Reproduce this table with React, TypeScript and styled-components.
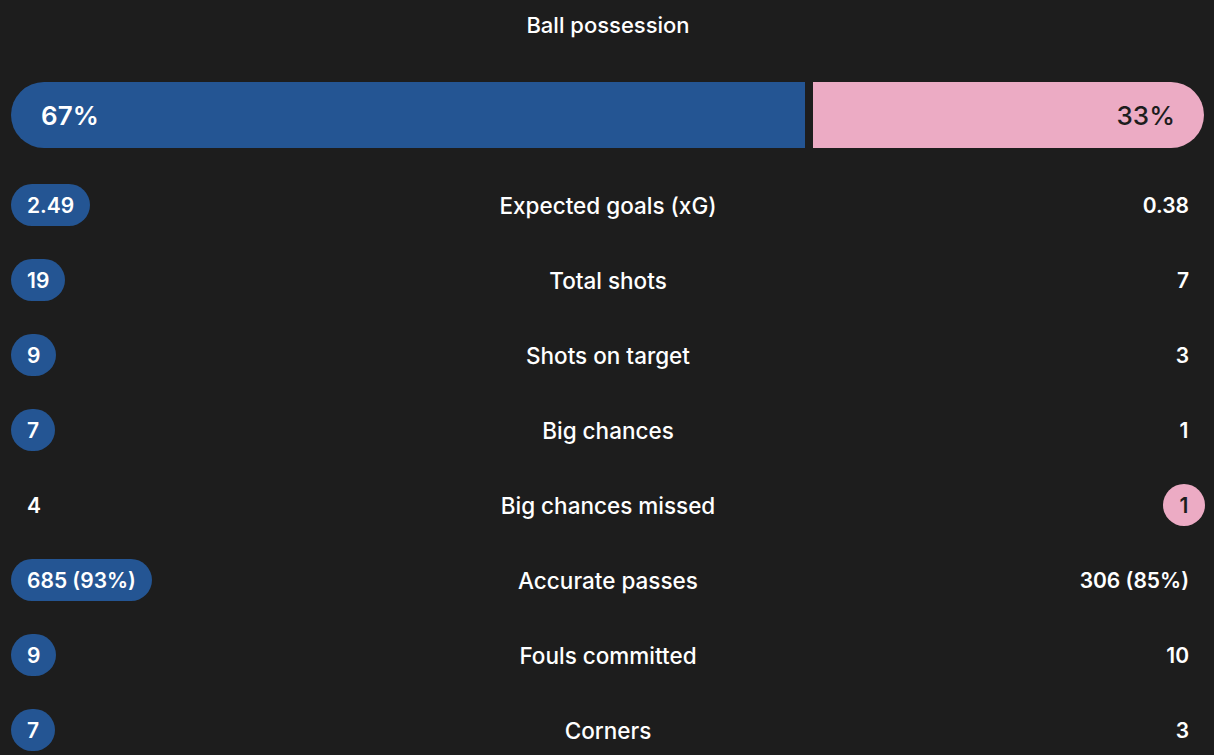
import React from "react";
import styled, { createGlobalStyle } from "styled-components";

const GlobalStyle = createGlobalStyle`
  html, body {
    margin: 0;
    padding: 0;
    background: #1d1d1d;
  }
  body {
    font-family: Inter, "Noto Sans", "Liberation Sans", sans-serif;
    color: #ffffff;
    -webkit-font-smoothing: antialiased;
  }
`;

const Page = styled.div`
  box-sizing: border-box;
  width: 1214px;
  height: 755px;
  overflow: hidden;
  padding: 0 9px 0 11px;
  background: #1d1d1d;
`;

const Title = styled.div`
  height: 50px;
  display: flex;
  align-items: center;
  justify-content: center;
  font-size: 22px;
  font-weight: 500;
  color: #ffffff;
`;

const PossessionBar = styled.div`
  margin-top: 32px;
  margin-right: 1px;
  height: 66px;
  display: flex;
  justify-content: space-between;
`;

const Segment = styled.div<{ $side: "home" | "away" }>`
  flex-shrink: 0;
  display: flex;
  align-items: center;
  justify-content: ${(p) => (p.$side === "home" ? "flex-start" : "flex-end")};
  box-sizing: border-box;
  padding: ${(p) => (p.$side === "home" ? "0 0 0 30px" : "0 29px 0 0")};
  background: ${(p) => (p.$side === "home" ? "#245593" : "#ecabc4")};
  color: ${(p) => (p.$side === "home" ? "#ffffff" : "#1d1d1d")};
  border-radius: ${(p) => (p.$side === "home" ? "33px 0 0 33px" : "0 33px 33px 0")};
  font-size: 26px;
  font-weight: ${(p) => (p.$side === "home" ? 600 : 500)};
`;

const StatsList = styled.div`
  margin-top: 36px;
  display: flex;
  flex-direction: column;
  gap: 33px;
`;

const Row = styled.div`
  display: grid;
  grid-template-columns: 1fr auto 1fr;
  align-items: center;
  height: 42px;
`;

const Label = styled.div`
  font-size: 22.5px;
  font-weight: 500;
  color: #ffffff;
  text-align: center;
`;

const Value = styled.div<{ $side: "home" | "away"; $lead: boolean }>`
  justify-self: ${(p) => (p.$side === "home" ? "start" : "end")};
  box-sizing: border-box;
  height: 42px;
  min-width: 42px;
  padding: 0 16px 0 16px;
  border-radius: 21px;
  display: flex;
  align-items: center;
  justify-content: center;
  font-size: 21px;
  font-weight: 600;
  background: ${(p) =>
    p.$lead ? (p.$side === "home" ? "#245593" : "#ecabc4") : "transparent"};
  color: ${(p) => (p.$lead && p.$side === "away" ? "#1d1d1d" : "#ffffff")};
`;

type Stat = { label: string; home: string; away: string; lead: "home" | "away" };

const stats: Stat[] = [
  { label: "Expected goals (xG)", home: "2.49", away: "0.38", lead: "home" },
  { label: "Total shots", home: "19", away: "7", lead: "home" },
  { label: "Shots on target", home: "9", away: "3", lead: "home" },
  { label: "Big chances", home: "7", away: "1", lead: "home" },
  { label: "Big chances missed", home: "4", away: "1", lead: "away" },
  { label: "Accurate passes", home: "685 (93%)", away: "306 (85%)", lead: "home" },
  { label: "Fouls committed", home: "9", away: "10", lead: "home" },
  { label: "Corners", home: "7", away: "3", lead: "home" },
];

const possession = { home: 67, away: 33 };
const GAP = 8;

export default function App() {
  const share = (v: number) => `calc((100% - ${GAP}px) * ${v / 100})`;
  return (
    <Page>
      <GlobalStyle />
      <Title>Ball possession</Title>
      <PossessionBar>
        <Segment $side="home" style={{ width: share(possession.home) }}>
          {possession.home}%
        </Segment>
        <Segment $side="away" style={{ width: share(possession.away) }}>
          {possession.away}%
        </Segment>
      </PossessionBar>
      <StatsList>
        {stats.map((s) => (
          <Row key={s.label}>
            <Value $side="home" $lead={s.lead === "home"}>
              {s.home}
            </Value>
            <Label>{s.label}</Label>
            <Value $side="away" $lead={s.lead === "away"}>
              {s.away}
            </Value>
          </Row>
        ))}
      </StatsList>
    </Page>
  );
}
